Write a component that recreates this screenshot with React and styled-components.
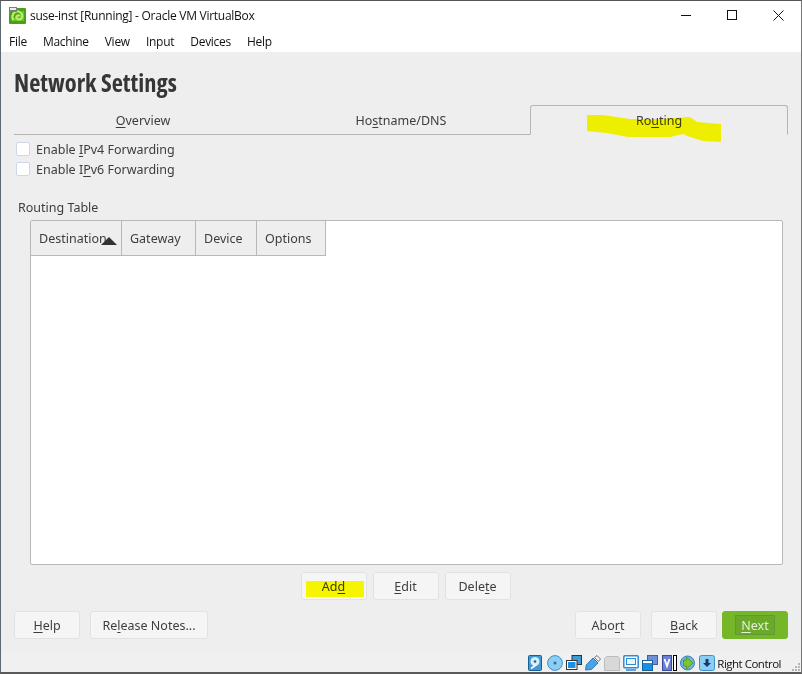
import React from "react";
import styled, { createGlobalStyle } from "styled-components";

const Global = createGlobalStyle`
  html, body { margin: 0; padding: 0; background: #fff; }
  body { font-family: "Noto Sans", sans-serif; }
  * { box-sizing: border-box; }
`;

const Windowed = styled.div`
  position: relative;
  width: 802px;
  height: 674px;
  display: flex;
  flex-direction: column;
  overflow: hidden;
  border-top: 1px solid #555;
  border-left: 1px solid #5c6a70;
  border-right: 1px solid #777;
  border-bottom: 2px solid #5a5a5a;
  background: #fff;
`;

const TitleBar = styled.div`
  height: 29px;
  display: flex;
  align-items: center;
  padding-left: 8px;
  flex: none;
`;

const TitleText = styled.span`
  margin-left: 4px;
  font-family: "Open Sans", sans-serif;
  font-size: 12px;
  letter-spacing: -0.26px;
  color: #111;
  white-space: nowrap;
`;

const WindowControls = styled.div`
  margin-left: auto;
  display: flex;
  align-items: center;
  gap: 35px;
  padding-right: 17px;
`;

const MenuBar = styled.div`
  height: 22px;
  display: flex;
  align-items: center;
  padding-left: 8px;
  gap: 16px;
  flex: none;
  font-family: "Open Sans", sans-serif;
  font-size: 12px;
  letter-spacing: -0.27px;
  color: #111;
`;

const Content = styled.div`
  height: 600px;
  flex: none;
  background: #eeeeee;
  padding: 0 13px;
  display: flex;
  flex-direction: column;
  color: #3d3d3d;
  font-size: 12.5px;
`;

const Heading = styled.h1`
  margin: 16px 0 0;
  height: 37px;
  font-family: "Open Sans", sans-serif;
  font-stretch: 75%;
  font-weight: 700;
  font-size: 24.4px;
  line-height: 30px;
  color: #363636;
  white-space: nowrap;
`;

const Tabs = styled.div`
  display: flex;
  height: 30px;
  flex: none;
`;

const Tab = styled.div`
  width: 258px;
  display: flex;
  align-items: center;
  justify-content: center;
  border-bottom: ${(p) => (p.$active ? "1px solid transparent" : "1px solid #b5b5b5")};
  border-top: ${(p) => (p.$active ? "1px solid #b5b5b5" : "1px solid transparent")};
  border-left: ${(p) => (p.$active ? "1px solid #b5b5b5" : "none")};
  border-right: ${(p) => (p.$active ? "1px solid #b5b5b5" : "none")};
  border-radius: ${(p) => (p.$active ? "3px 3px 0 0" : "0")};
`;

const Mn = styled.span`
  text-decoration: underline;
  text-underline-offset: 2px;
  text-decoration-thickness: 1px;
`;

const Checks = styled.div`
  display: flex;
  flex-direction: column;
  gap: 6px;
  padding: 7px 0 0 2px;
`;

const CheckRow = styled.label`
  display: flex;
  align-items: center;
  gap: 6px;
  height: 14px;
  white-space: nowrap;
`;

const CheckBox = styled.span`
  width: 14px;
  height: 14px;
  flex: none;
  background: #ffffff;
  border: 1px solid #cfd6e6;
  border-radius: 2px;
`;

const SectionLabel = styled.div`
  margin: 22px 0 0 4px;
  height: 22px;
  line-height: 20px;
`;

const Table = styled.div`
  margin-left: 16px;
  margin-right: 5px;
  height: 345px;
  flex: none;
  background: #fff;
  border: 1px solid #b8b8b8;
  border-radius: 2px;
`;

const HeaderRow = styled.div`
  display: flex;
  height: 35px;
`;

const HeaderCell = styled.div`
  position: relative;
  width: ${(p) => p.$w}px;
  display: flex;
  align-items: center;
  padding-left: 8px;
  background: #eeeeee;
  border-right: 1px solid #b8b8b8;
  border-bottom: 1px solid #b8b8b8;
`;

const SortMark = styled.span`
  position: absolute;
  left: 70px;
  top: 16px;
  width: 0;
  height: 0;
  border-left: 8.5px solid transparent;
  border-right: 8.5px solid transparent;
  border-bottom: 8px solid #333;
`;

const ActionRow = styled.div`
  display: flex;
  justify-content: center;
  gap: 6px;
  padding: 7px 0 0 9px;
`;

const FooterRow = styled.div`
  display: flex;
  margin-top: 11px;
`;

const FooterGroup = styled.div`
  display: flex;
  gap: 10px;
  margin-left: ${(p) => (p.$right ? "auto" : "0")};
`;

const Button = styled.div`
  position: relative;
  width: ${(p) => p.$w || 66}px;
  height: 28px;
  display: flex;
  align-items: center;
  justify-content: center;
  background: #f5f5f5;
  border: 1px solid #e2e2e2;
  border-radius: 3px;
  white-space: nowrap;
`;

const NextButton = styled(Button)`
  margin-left: -5px;
  background: #75b728;
  border-color: #75b728;
  color: #e4f2d2;
`;

const FocusRing = styled.span`
  width: 40px;
  height: 20px;
  display: flex;
  align-items: center;
  justify-content: center;
  background: #6aa92a;
  border: 1px solid #5e9c33;
`;

const StatusBar = styled.div`
  flex: 1;
  background: #f0f0f0;
  display: flex;
  align-items: center;
  justify-content: flex-end;
  padding: 2px 1px 0 0;
  font-family: "Open Sans", sans-serif;
  font-size: 11.5px;
  letter-spacing: -0.5px;
  color: #111;
`;

const StatusIcons = styled.div`
  display: flex;
  align-items: center;
  gap: 3px;
`;

const IconPair = styled.div`
  display: flex;
  align-items: center;
`;

const RightControl = styled.span`
  margin-left: 2px;
  white-space: nowrap;
`;

const Grip = styled.svg`
  margin-left: 11px;
  align-self: flex-end;
  margin-bottom: 1px;
`;

const Scribble = styled.svg`
  position: absolute;
  left: 0;
  top: 0;
  mix-blend-mode: multiply;
  pointer-events: none;
`;

const Logo = () => (
  <svg width="17" height="17" viewBox="0 0 17 17">
    <rect x="0" y="1" width="17" height="16" rx="1" fill="#4c9f18" />
    <path d="M2 14L15 14 15 3z" fill="#6cc427" />
    <path d="M4.500 13C1.500 9 5 3.800 9.500 4.500c3.500.6 5 4.500 2.800 7-1.800 1.800-5 1-5-1.300 0-1.700 2.200-2.300 3.200-1" fill="none" stroke="#b9ee70" strokeWidth="2.200" />
    <rect x="0" y="0" width="8" height="5" fill="#7d7d7d" />
    <rect x="1" y="1" width="6" height="2" fill="#ececec" />
  </svg>
);

const Minimize = () => (
  <svg width="11" height="11" viewBox="0 0 11 11"><path d="M0 5.500h10" stroke="#111" fill="none" /></svg>
);
const Maximize = () => (
  <svg width="11" height="11" viewBox="0 0 11 11"><rect x=".5" y=".5" width="9" height="9" stroke="#111" fill="none" /></svg>
);
const Close = () => (
  <svg width="11" height="11" viewBox="0 0 11 11"><path d="M.5.500l10 10M10.500.500l-10 10" stroke="#111" fill="none" /></svg>
);

const HddIcon = () => (
  <svg width="16" height="16" viewBox="0 0 16 16">
    <rect x=".5" y=".5" width="13" height="15" rx="1" fill="#3f9ad8" stroke="#1d5f94" />
    <circle cx="7" cy="6.500" r="4.500" fill="#d6eefa" />
    <circle cx="7" cy="6.500" r="1.300" fill="#1d5f94" />
    <path d="M3 13.500l5-3.500" stroke="#fff" strokeWidth="1.600" />
  </svg>
);
const CdIcon = () => (
  <svg width="16" height="16" viewBox="0 0 16 16">
    <circle cx="8" cy="8" r="7.400" fill="#8ecdf2" stroke="#3a8fd0" />
    <circle cx="8" cy="8" r="1.500" fill="#2a6da8" />
  </svg>
);
const NetIcon = () => (
  <svg width="16" height="16" viewBox="0 0 16 16">
    <rect x="6" y=".5" width="9.500" height="9" fill="#3f9ad8" stroke="#333" />
    <rect x=".5" y="5.500" width="10.500" height="9" fill="#fff" stroke="#333" />
    <rect x="2" y="7" width="7.500" height="6" fill="#1e8fe0" />
  </svg>
);
const UsbIcon = () => (
  <svg width="16" height="16" viewBox="0 0 16 16">
    <path d="M.5 15l.8-5L8 3l5 5-6.700 6.500z" fill="#4ba3e4" stroke="#2a78bd" />
    <path d="M9.500 2.500L12 .5l3.500 3.500-2 2.500z" fill="#f4f4f4" stroke="#555" strokeWidth=".8" />
  </svg>
);
const FolderIcon = () => (
  <svg width="16" height="16" viewBox="0 0 16 16">
    <path d="M.5 3.500l2-2h11.500l1.500 1.500v12.500H.5z" fill="#d8d8d8" stroke="#bdbdbd" />
  </svg>
);
const DisplayIcon = () => (
  <svg width="16" height="16" viewBox="0 0 16 16">
    <rect x=".8" y=".8" width="14.400" height="12" rx="1" fill="#fff" stroke="#2d8ad6" strokeWidth="1.500" />
    <rect x="3.500" y="3.500" width="9" height="6" fill="#e8f5fd" stroke="#2d8ad6" />
    <path d="M3 15h10" stroke="#2d8ad6" strokeWidth="1.500" />
  </svg>
);
const CaptureIcon = () => (
  <svg width="16" height="16" viewBox="0 0 16 16">
    <rect x="5.500" y=".5" width="10" height="9" fill="#6f8fd8" stroke="#4a5d99" />
    <rect x=".5" y="5.500" width="10" height="10" fill="#1e8fe0" stroke="#14639e" />
    <path d="M1 6h9v2H1z" fill="#fff" />
  </svg>
);
const CpuIcon = () => (
  <svg width="12" height="16" viewBox="0 0 12 16">
    <rect x="1.500" y=".5" width="9" height="15" fill="#6a80d8" stroke="#3b4b99" />
    <path d="M3.500 4l2.500 7 2.500-7" fill="none" stroke="#fff" strokeWidth="1.800" />
  </svg>
);
const Bar = () => (
  <svg width="4" height="16" viewBox="0 0 4 16"><rect x=".5" y=".5" width="3" height="15" fill="#fff" stroke="#000" /></svg>
);
const GlobeIcon = () => (
  <svg width="16" height="16" viewBox="0 0 16 16">
    <circle cx="7.500" cy="8" r="7" fill="#6fb5e6" stroke="#3a7fb8" />
    <path d="M6.500 2l6.500 6-6.500 6v-3H3.500V5h3z" fill="#7cc62f" stroke="#4e8e17" strokeWidth=".8" />
  </svg>
);
const DownIcon = () => (
  <svg width="16" height="16" viewBox="0 0 16 16">
    <rect x=".5" y=".5" width="15" height="15" rx="2" fill="#8ecdf2" stroke="#3a8fd0" />
    <path d="M6.500 4h3v4H12l-4 4-4-4h2.500z" fill="#123a7a" />
  </svg>
);

const Highlights = () => (
  <Scribble width="802" height="674" viewBox="0 0 802 674">
    <path
      d="M586 114 L602 114 L629 118 L659 118 L689 116 L696 121 L720 123 L720 141 L702 140 L689 136 L682 133 L669 136 L627 136 L606 132 L586 130 Z"
      fill="#ffff00"
    />
    <rect x="305" y="580" width="58" height="16" fill="#ffff00" />
  </Scribble>
);

export default function App() {
  return (
    <Windowed>
      <Global />
      <TitleBar>
        <Logo />
        <TitleText>suse-inst [Running] - Oracle VM VirtualBox</TitleText>
        <WindowControls>
          <Minimize />
          <Maximize />
          <Close />
        </WindowControls>
      </TitleBar>
      <MenuBar>
        <span>File</span>
        <span>Machine</span>
        <span>View</span>
        <span>Input</span>
        <span>Devices</span>
        <span>Help</span>
      </MenuBar>
      <Content>
        <Heading>Network Settings</Heading>
        <Tabs>
          <Tab><span><Mn>O</Mn>verview</span></Tab>
          <Tab><span>Ho<Mn>s</Mn>tname/DNS</span></Tab>
          <Tab $active><span>Ro<Mn>u</Mn>ting</span></Tab>
        </Tabs>
        <Checks>
          <CheckRow><CheckBox /><span>Enable <Mn>I</Mn>Pv4 Forwarding</span></CheckRow>
          <CheckRow><CheckBox /><span>Enable I<Mn>P</Mn>v6 Forwarding</span></CheckRow>
        </Checks>
        <SectionLabel>Routing Table</SectionLabel>
        <Table>
          <HeaderRow>
            <HeaderCell $w={91}>Destination<SortMark /></HeaderCell>
            <HeaderCell $w={74}>Gateway</HeaderCell>
            <HeaderCell $w={61}>Device</HeaderCell>
            <HeaderCell $w={69}>Options</HeaderCell>
          </HeaderRow>
        </Table>
        <ActionRow>
          <Button><span>Ad<Mn>d</Mn></span></Button>
          <Button><span><Mn>E</Mn>dit</span></Button>
          <Button><span>Dele<Mn>t</Mn>e</span></Button>
        </ActionRow>
        <FooterRow>
          <FooterGroup>
            <Button><span><Mn>H</Mn>elp</span></Button>
            <Button $w={118}><span>Re<Mn>l</Mn>ease Notes...</span></Button>
          </FooterGroup>
          <FooterGroup $right>
            <Button><span>Abo<Mn>r</Mn>t</span></Button>
            <Button><span><Mn>B</Mn>ack</span></Button>
            <NextButton><FocusRing><span><Mn>N</Mn>ext</span></FocusRing></NextButton>
          </FooterGroup>
        </FooterRow>
      </Content>
      <StatusBar>
        <StatusIcons>
          <HddIcon /><CdIcon /><NetIcon /><UsbIcon /><FolderIcon /><DisplayIcon /><CaptureIcon />
          <IconPair><CpuIcon /><Bar /></IconPair>
          <GlobeIcon /><DownIcon />
        </StatusIcons>
        <RightControl>Right Control</RightControl>
        <Grip width="8" height="8" viewBox="0 0 8 8">
          <path d="M6 0h2v2H6zM3 3h2v2H3zM6 3h2v2H6zM0 6h2v2H0zM3 6h2v2H3zM6 6h2v2H6z" fill="#b5b5b5" />
        </Grip>
      </StatusBar>
      <Highlights />
    </Windowed>
  );
}
